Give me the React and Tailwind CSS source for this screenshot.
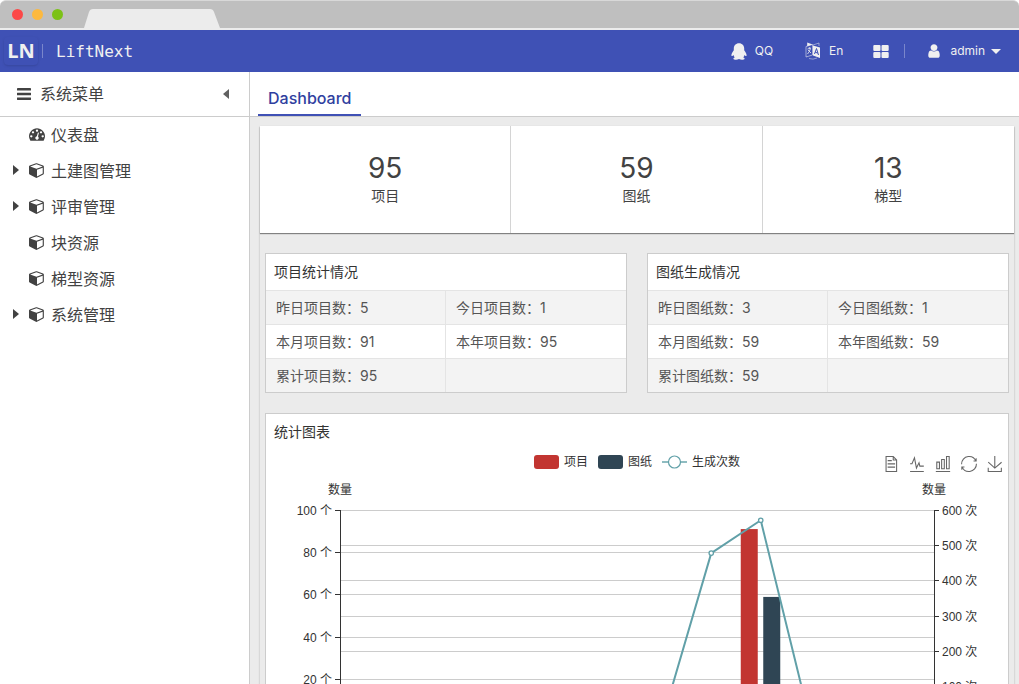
import { useState } from 'react';

const FA_CUBE =
    'M896 1629l640-349v-636l-640 233v752zm-64-865l698-254-698-254-698 254zm832-252v768q0 35-18 65t-49 47l-704 384q-28 16-61 16t-61-16l-704-384q-31-17-49-47t-18-65v-768q0-40 23-73t61-47l704-256q22-8 44-8t44 8l704 256q38 14 61 47t23 73z';
const FA_DASHBOARD =
    'M384 1152q0-53-37.5-90.5t-90.5-37.5-90.5 37.5-37.5 90.5 37.5 90.5 90.5 37.5 90.5-37.5 37.5-90.5zm192-448q0-53-37.5-90.5t-90.5-37.5-90.5 37.5-37.5 90.5 37.5 90.5 90.5 37.5 90.5-37.5 37.5-90.5zm428 481l101-382q6-26-7.5-48.5t-38.5-29.5-48 6.5-30 39.5l-101 382q-60 5-107 43.5t-63 98.5q-20 77 20 146t117 89 146-20 89-117q16-60-6-117t-72-91zm660-33q0-53-37.5-90.5t-90.5-37.5-90.5 37.5-37.5 90.5 37.5 90.5 90.5 37.5 90.5-37.5 37.5-90.5zm-640-640q0-53-37.5-90.5t-90.5-37.5-90.5 37.5-37.5 90.5 37.5 90.5 90.5 37.5 90.5-37.5 37.5-90.5zm448 192q0-53-37.5-90.5t-90.5-37.5-90.5 37.5-37.5 90.5 37.5 90.5 90.5 37.5 90.5-37.5 37.5-90.5zm320 448q0 261-141 483-19 29-54 29h-1402q-35 0-54-29-141-221-141-483 0-182 71-348t191-286 286-191 348-71 348 71 286 191 191 286 71 348z';
const FA_USER =
    'M1536 1399q0 109-62.5 187t-150.5 78h-854q-88 0-150.5-78t-62.5-187q0-85 8.5-160.5t31.5-152 58.5-131 94-89 134.5-34.5q131 128 313 128t313-128q76 0 134.5 34.5t94 89 58.5 131 31.5 152 8.5 160.5zm-256-887q0 159-112.5 271.5t-271.5 112.5-271.5-112.5-112.5-271.5 112.5-271.5 271.5-112.5 271.5 112.5 112.5 271.5z';

const menu = [
    { label: '仪表盘', icon: FA_DASHBOARD },
    { label: '土建图管理', icon: FA_CUBE, children: true },
    { label: '评审管理', icon: FA_CUBE, children: true },
    { label: '块资源', icon: FA_CUBE },
    { label: '梯型资源', icon: FA_CUBE },
    { label: '系统管理', icon: FA_CUBE, children: true },
];

const totals = [
    { value: 95, label: '项目' },
    { value: 59, label: '图纸' },
    { value: 13, label: '梯型' },
];

const projectRows = [
    ['昨日项目数：5', '今日项目数：1'],
    ['本月项目数：91', '本年项目数：95'],
    ['累计项目数：95', ''],
];

const drawingRows = [
    ['昨日图纸数：3', '今日图纸数：1'],
    ['本月图纸数：59', '本年图纸数：59'],
    ['累计图纸数：59', ''],
];

const tools = [
    {
        name: 'dataView',
        d: 'M17.5,17.3H33 M45.4,29.5h-28 M11.5,2v56H51V14.8L38.4,2H11.5z M38.4,2.2v12.7H51 M45.4,41.7h-28',
    },
    {
        name: 'line',
        d: 'M4.1,28.9h7.1l9.3-22l7.4,38l9.7-19.7l3,12.8h14.9M4.1,58h51.4',
    },
    {
        name: 'bar',
        d: 'M6.7,22.9h10V48h-10V22.9zM24.9,13h10v35h-10V13zM43.2,2h10v46h-10V2zM3.1,58h53.7',
    },
    {
        name: 'restore',
        d: 'M47,18.9h9.8V8.7 M56.3,20.1 C52.1,9,40.5,0.6,26.8,2.1C12.6,3.7,1.6,16.2,2.1,30.6 M13,41.1H3.1v10.2 M3.7,39.9c4.2,11.1,15.8,19.5,29.5,18 c14.2-1.6,25.2-14.1,24.7-28.5',
    },
    {
        name: 'saveAsImage',
        d: 'M4.7,22.9L29.3,45.5L54.7,23.4M4.6,43.6L4.6,58L53.8,58L53.8,43.6M29.2,45.1L29.2,0',
    },
];

const projects = [0, 0, 0, 0, 0, 0, 0, 0, 91, 0, 0, 0];
const drawings = [0, 0, 0, 0, 0, 0, 0, 0, 59, 0, 0, 0];
const generated = [0, 0, 0, 0, 0, 0, 0, 478, 571, 0, 0, 0];

function FaIcon({ d, className }) {
    return (
        <svg viewBox="0 0 1792 1792" fill="currentColor" className={className} aria-hidden="true">
            <path d={d} />
        </svg>
    );
}

function BrowserBar() {
    return (
        <div className="h-[30px] shrink-0 rounded-t-md border-t border-[#d8d8d8] bg-[#bfbfbf]">
            <div className="flex h-full items-end border-b-2 border-[#ececec]">
                <div className="flex gap-[9px] self-center pl-3">
                    <span className="size-[11px] rounded-full bg-[#fc4848]" />
                    <span className="size-[11px] rounded-full bg-[#fdb93f]" />
                    <span className="size-[11px] rounded-full bg-[#7cc116]" />
                </div>
                <svg viewBox="0 0 136 19" className="ml-[21px] w-[136px]" aria-hidden="true">
                    <path d="M0 19L5 3Q6 0 9 0H126Q129 0 130 3L136 19Z" fill="#ececec" />
                </svg>
            </div>
        </div>
    );
}

function Header() {
    return (
        <header className="flex h-[42px] shrink-0 items-center bg-[#3f51b5] text-[#f0f0f0]">
            <a href="#" className="flex items-center">
                <span className="ml-1 flex h-7 w-[34px] items-center justify-center rounded-sm font-['Open_Sans',sans-serif] text-xl font-bold shadow-sm">
                    LN
                </span>
                <span className="ml-1 h-[14px] w-px bg-[#7a86cb]" />
                <span className="ml-[13px] pt-[2px] font-['DejaVu_Sans_Mono',monospace] text-base">LiftNext</span>
            </a>

            <nav className="ml-auto flex items-center text-xs">
                <button type="button" className="flex items-center gap-2">
                    <svg viewBox="0 0 16 17" className="h-[17px] w-4" fill="currentColor" aria-hidden="true">
                        <path d="M8 0.3C11.2 0.3 13.2 2.6 13.2 5.6V7.2C14.3 8.6 15.6 10.6 15.6 12.2C15.6 13.2 15 13.3 14.6 12.9L13.5 12C13.3 13 12.9 13.8 12.3 14.4C13.2 14.7 13.7 15.2 13.6 15.7C13.4 16.9 9.6 16.9 8 16.1C6.4 16.9 2.6 16.9 2.4 15.7C2.3 15.2 2.8 14.7 3.7 14.4C3.1 13.8 2.7 13 2.5 12L1.4 12.9C1 13.3 0.4 13.2 0.4 12.2C0.4 10.6 1.7 8.6 2.8 7.2V5.6C2.8 2.6 4.8 0.3 8 0.3Z" />
                    </svg>
                    QQ
                </button>
                <button type="button" className="ml-8 flex items-center gap-2">
                    <svg viewBox="0 0 16 18" className="h-[18px] w-4" fill="none" stroke="currentColor" aria-hidden="true">
                        <path d="M1 4.5L7.5 2.5V13L1 15Z" strokeWidth="0.8" opacity="0.7" />
                        <path d="M2.5 7L6 6M4.2 5L4.5 6.5M5.5 6.5Q4.5 10 2.5 12M3 8L6 11" strokeWidth="0.8" />
                        <path d="M8 3L14 1V4M4 16.5Q8 18 12 16" strokeWidth="0.8" opacity="0.6" />
                        <path d="M2.2 0.6L7.6 2.6L2.2 4.2Z" fill="currentColor" stroke="none" />
                        <path d="M8 3.5L15 5.5V16L8 13.5Z" fill="currentColor" stroke="none" />
                        <path d="M9.5 12L11.5 6.5L13.5 13M10.2 10.3L12.8 11" stroke="#3f51b5" strokeWidth="1" />
                    </svg>
                    En
                </button>
                <button type="button" className="ml-[30px]" aria-label="apps">
                    <svg viewBox="0 0 16 13" className="h-[13px] w-4" fill="currentColor">
                        <rect x="0.3" y="0" width="7.2" height="6" rx="1" />
                        <rect x="8.5" y="0" width="7.2" height="6" rx="1" />
                        <rect x="0.3" y="7" width="7.2" height="6" rx="1" />
                        <rect x="8.5" y="7" width="7.2" height="6" rx="1" />
                    </svg>
                </button>
                <span className="ml-[15px] h-[14px] w-px bg-[#7a86cb]" />
                <button type="button" className="mr-[18px] ml-[21px] flex items-center gap-2">
                    <FaIcon d={FA_USER} className="size-4" />
                    <span className="flex items-center gap-[6px]">
                        admin
                        <svg viewBox="0 0 10 5" className="w-[10px]" fill="currentColor" aria-hidden="true">
                            <path d="M0 0H10L5 5Z" />
                        </svg>
                    </span>
                </button>
            </nav>
        </header>
    );
}

function Sidebar() {
    return (
        <aside className="w-[250px] shrink-0 border-r border-[#ccc] bg-white text-base text-[#424242]">
            <div className="flex h-[45px] items-center border-b border-[#ccc] pr-5 pl-[17px]">
                <svg viewBox="0 0 14 12" className="w-[14px]" fill="currentColor" aria-hidden="true">
                    <rect width="14" height="2.6" y="0" rx="0.4" />
                    <rect width="14" height="2.6" y="4.7" rx="0.4" />
                    <rect width="14" height="2.6" y="9.4" rx="0.4" />
                </svg>
                <h2 className="ml-[9px]">系统菜单</h2>
                <button type="button" className="ml-auto" aria-label="collapse">
                    <svg viewBox="0 0 6 10" className="w-[6px] text-[#616161]" fill="currentColor">
                        <path d="M6 0V10L0 5Z" />
                    </svg>
                </button>
            </div>
            <ul>
                {menu.map((item) => (
                    <li key={item.label}>
                        <a href="#" className="flex h-9 items-center pl-[13px]">
                            <span className="flex items-center pb-[2px]">
                                <span className="w-4">
                                    {item.children && (
                                        <svg viewBox="0 0 6 10" className="w-[6px]" fill="currentColor" aria-hidden="true">
                                            <path d="M0 0V10L6 5Z" />
                                        </svg>
                                    )}
                                </span>
                                <FaIcon d={item.icon} className="size-4" />
                            </span>
                            <span className="ml-[6px]">{item.label}</span>
                        </a>
                    </li>
                ))}
            </ul>
        </aside>
    );
}

function StatTable({ title, rows }) {
    return (
        <section className="flex-1 border border-[#ccc] bg-white text-sm">
            <h3 className="flex h-9 items-center px-2 text-[#333]">{title}</h3>
            <table className="w-full table-fixed border-separate border-spacing-0 text-[#555]">
                <tbody>
                    {rows.map((row) => (
                        <tr key={row[0]} className="odd:bg-[#f3f3f3]">
                            {row.map((cell, i) => (
                                <td key={i} className="h-[34px] border-t border-r border-[#e4e4e4] px-[10px] py-0 last:border-r-0">
                                    {cell}
                                </td>
                            ))}
                        </tr>
                    ))}
                </tbody>
            </table>
        </section>
    );
}

function Chart() {
    const left = 74;
    const right = 668;
    const top = 32;
    const bottom = 244;
    const step = (right - left) / 12;
    const y = (value, max) => bottom - ((bottom - top) * value) / max;
    const center = (i) => left + step * (i + 0.5);
    const crisp = (n) => Math.floor(n) + 0.5;

    return (
        <svg
            viewBox="0 0 742 260"
            className="w-full font-['Liberation_Sans','Noto_Sans_CJK_SC',sans-serif] text-xs"
            fill="#333"
        >
            <text x="74" y="16" textAnchor="middle">数量</text>
            <text x="668" y="16" textAnchor="middle">数量</text>

            {[0, 20, 40, 60, 80, 100].map((v) => (
                <g key={v}>
                    <path d={`M${left} ${crisp(y(v, 100))}H${right}`} stroke="#ccc" />
                    <path d={`M${left - 5} ${crisp(y(v, 100))}H${left}`} stroke="#333" />
                    <text x={left - 8} y={crisp(y(v, 100)) + 4} textAnchor="end">{`${v} 个`}</text>
                </g>
            ))}
            {[0, 100, 200, 300, 400, 500, 600].map((v) => (
                <g key={v}>
                    <path d={`M${left} ${crisp(y(v, 600))}H${right}`} stroke="#ccc" />
                    <path d={`M${right} ${crisp(y(v, 600))}H${right + 5}`} stroke="#333" />
                    <text x={right + 8} y={crisp(y(v, 600)) + 4}>{`${v} 次`}</text>
                </g>
            ))}
            <path d={`M${left + 0.5} ${top}V${bottom}M${right + 0.5} ${top}V${bottom}`} stroke="#333" />

            {projects.map((v, i) => (
                <rect key={i} x={center(i) - 20} y={y(v, 100)} width="17" height={bottom - y(v, 100)} fill="#c23531" />
            ))}
            {drawings.map((v, i) => (
                <rect key={i} x={center(i) + 2.5} y={y(v, 100)} width="17" height={bottom - y(v, 100)} fill="#2f4554" />
            ))}

            <polyline
                points={generated.map((v, i) => `${center(i)},${y(v, 600)}`).join(' ')}
                fill="none"
                stroke="#61a0a8"
                strokeWidth="2"
                strokeLinejoin="bevel"
            />
            {generated.map((v, i) => (
                <circle key={i} cx={center(i)} cy={y(v, 600)} r="2.2" fill="#fff" stroke="#61a0a8" strokeWidth="1.3" />
            ))}
        </svg>
    );
}

function ChartCard() {
    return (
        <section className="mt-5 border border-[#ccc] bg-white">
            <h3 className="flex h-9 items-center px-2 text-sm text-[#333]">统计图表</h3>
            <div className="grid grid-cols-[1fr_auto_1fr] items-start">
                <div className="col-start-2 flex h-6 items-center gap-[10px] font-['Liberation_Sans','Noto_Sans_CJK_SC',sans-serif] text-xs text-[#333]">
                    <button type="button" className="flex items-center gap-[5px]">
                        <span className="h-[14px] w-[25px] rounded-[3px] bg-[#c23531]" />
                        项目
                    </button>
                    <button type="button" className="flex items-center gap-[5px]">
                        <span className="h-[14px] w-[25px] rounded-[3px] bg-[#2f4554]" />
                        图纸
                    </button>
                    <button type="button" className="flex items-center gap-[5px]">
                        <svg viewBox="0 0 25 14" className="w-[25px]" stroke="#61a0a8" aria-hidden="true">
                            <path d="M0 7H25" strokeWidth="2" opacity="0.7" />
                            <circle cx="12.5" cy="7" r="6" fill="#fff" strokeWidth="1.2" />
                        </svg>
                        生成次数
                    </button>
                </div>
                <div className="flex h-7 items-center justify-end gap-[10px] pr-[5px]">
                    {tools.map((tool) => (
                        <button key={tool.name} type="button" aria-label={tool.name}>
                            <svg viewBox="0 0 60 60" className="size-4 overflow-visible" fill="none" stroke="#666" strokeWidth="4">
                                <path d={tool.d} />
                            </svg>
                        </button>
                    ))}
                </div>
            </div>
            <Chart />
        </section>
    );
}

export default function App() {
    const [tab, setTab] = useState('Dashboard');

    return (
        <div className="flex h-screen flex-col overflow-hidden bg-white font-[Inter,'Noto_Sans_CJK_SC',sans-serif]">
            <BrowserBar />
            <Header />
            <div className="flex min-h-0 flex-1">
                <Sidebar />
                <main className="flex min-w-0 flex-1 flex-col bg-[#ebebeb]">
                    <div className="flex h-[45px] shrink-0 border-b border-[#ccc] bg-white pl-2">
                        <button
                            type="button"
                            onClick={() => setTab('Dashboard')}
                            className={`border-b-2 px-[10px] pt-[10px] font-medium ${tab === 'Dashboard' ? 'border-[#3f51b5] text-[#303f9f]' : 'border-transparent'}`}
                        >
                            Dashboard
                        </button>
                    </div>
                    <div className="min-h-0 flex-1 overflow-y-auto pt-[9px] pr-[5px] pl-[10px] [scrollbar-width:none]">
                        <div className="shadow-[0_1px_2px_rgba(0,0,0,0.25)]">
                            <div className="grid grid-cols-3 divide-x divide-[#d4d4d4] bg-white text-center text-[#424242] shadow-[0_1px_1px_rgba(0,0,0,0.45)]">
                                {totals.map((item) => (
                                    <div key={item.label} className="pt-6 pb-[27px]">
                                        <p className="text-[28px] leading-9">{item.value}</p>
                                        <p className="text-sm leading-5">{item.label}</p>
                                    </div>
                                ))}
                            </div>
                            <div className="px-[5px] pt-5 pb-5">
                                <div className="flex gap-5">
                                    <StatTable title="项目统计情况" rows={projectRows} />
                                    <StatTable title="图纸生成情况" rows={drawingRows} />
                                </div>
                                <ChartCard />
                            </div>
                        </div>
                    </div>
                </main>
            </div>
        </div>
    );
}
